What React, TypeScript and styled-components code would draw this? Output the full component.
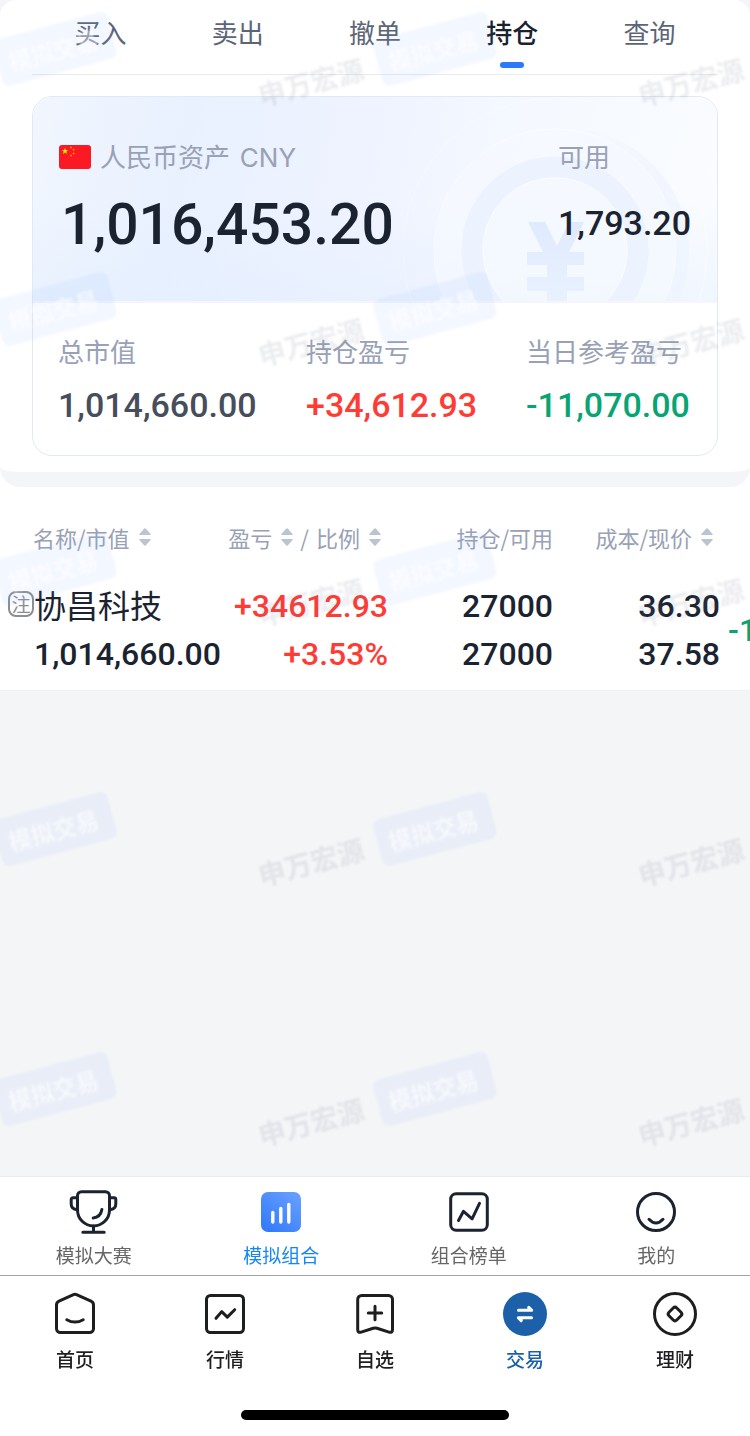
import React from "react";
import styled, { createGlobalStyle, css } from "styled-components";

const sans = `"Noto Sans CJK SC", "Noto Sans", sans-serif`;
const digits = `Roboto, "Noto Sans CJK SC", sans-serif`;

const color = {
  ink: "#1b2330",
  body: "#5c6577",
  muted: "#98a1b6",
  blue: "#2b7afb",
  brand: "#1c60a9",
  up: "#ff3b36",
  down: "#08a473",
  bg: "#f4f5f7",
};

const GlobalStyle = createGlobalStyle`
  *, *::before, *::after { box-sizing: border-box; }
  body { margin: 0; background: ${color.bg}; font-family: ${sans}; color: ${color.ink}; }
  button { margin: 0; padding: 0; border: 0; background: none; font: inherit; color: inherit; cursor: pointer; }
  a { color: inherit; text-decoration: none; }
`;

const Page = styled.div`
  position: relative;
  display: flex;
  flex-direction: column;
  min-height: 100vh;
  overflow: hidden;
`;

const ListSurface = styled.div`
  background: #fff;
`;

const Summary = styled.div`
  padding-bottom: 15px;
  background: #f4f5f9;
  border-radius: 0 0 20px 20px;
`;

const SummaryPanel = styled.div`
  padding: 0 32px 16px;
  background: #fff;
  border-radius: 16px 16px 20px 20px / 16px 16px 5px 5px;
`;

const Tabs = styled.nav`
  display: grid;
  grid-template-columns: repeat(5, 1fr);
  height: 75px;
  border-bottom: 1px solid #e9ebee;
`;

const Tab = styled.button<{ $active?: boolean }>`
  display: flex;
  flex-direction: column;
  align-items: center;
  gap: 9px;
  padding-top: 11px;
  font-size: 26px;
  line-height: 42px;
  color: ${(p) => (p.$active ? color.ink : color.body)};
  font-weight: ${(p) => (p.$active ? 500 : 400)};
  &::after {
    content: "";
    width: 24px;
    height: 6px;
    border-radius: 3px;
    background: ${(p) => (p.$active ? color.blue : "transparent")};
  }
`;

const Card = styled.section`
  margin-top: 21px;
  border: 1px solid #e2e9f4;
  border-radius: 20px;
  overflow: hidden;
`;

const Hero = styled.div`
  position: relative;
  display: flex;
  justify-content: space-between;
  height: 206px;
  padding: 39px 26px 0;
  border-bottom: 2px solid #f4f6fb;
  background:
    linear-gradient(0deg, rgba(222, 236, 255, 0.35), rgba(222, 236, 255, 0) 50%),
    linear-gradient(100deg, #f1f6fe 0%, #e9f1ff 22%, #eff3ff 48%, #f5f9ff 70%, #fafcff 100%);
`;

const Coin = styled.svg`
  position: absolute;
  right: 0;
  bottom: 0;
`;

const HeroBlock = styled.div`
  position: relative;
`;

const HeroLabel = styled.div`
  display: flex;
  align-items: center;
  gap: 9px;
  font-size: 26px;
  line-height: 40px;
  color: ${color.muted};
`;

const Currency = styled.span`
  margin-left: 4px;
  font-family: Inter, sans-serif;
`;

const Total = styled.div`
  margin-top: 12px;
  padding-left: 2px;
  font-family: ${digits};
  font-size: 57px;
  font-weight: 500;
  line-height: 70px;
`;

const Available = styled.div`
  margin-top: 26px;
  font-family: ${digits};
  font-size: 34px;
  font-weight: 500;
  line-height: 42px;
`;

const Stats = styled.dl`
  display: grid;
  grid-template-columns: 248fr 220fr 165fr;
  margin: 0;
  padding: 28px 26px 29px 25px;
`;

const StatLabel = styled.dt`
  font-size: 26px;
  line-height: 40px;
  white-space: nowrap;
  color: ${color.muted};
`;

const StatValue = styled.dd<{ $color: string }>`
  margin: 13px 0 0;
  font-family: ${digits};
  font-size: 34px;
  font-weight: 500;
  line-height: 42px;
  color: ${(p) => p.$color};
`;

const TableScroll = styled.div`
  overflow-x: auto;
  scrollbar-width: none;
  background: #fff;
  border-bottom: 1px solid #f0f1f3;
`;

const Table = styled.table`
  width: 920px;
  table-layout: fixed;
  border-collapse: collapse;
`;

const Col = styled.col<{ $w: number }>`
  width: ${(p) => p.$w}px;
`;

const Head = styled.th<{ $left?: number; $right?: number }>`
  padding: 34px ${(p) => p.$right ?? 0}px 29px ${(p) => p.$left ?? 0}px;
  text-align: ${(p) => (p.$left === undefined ? "right" : "left")};
  font-size: 22px;
  font-weight: 400;
  line-height: 32px;
  white-space: nowrap;
  color: ${color.muted};
`;

const SortButton = styled.button`
  display: inline-flex;
  align-items: center;
  gap: 9px;
  line-height: 32px;
`;

const Slash = styled.span`
  padding: 0 7px;
`;

const numberCell = css`
  font-family: ${digits};
  font-size: 32px;
  font-weight: 500;
  line-height: 48px;
`;

const Cell = styled.td<{ $color?: string; $left?: number }>`
  ${numberCell}
  padding: 0 0 12px ${(p) => p.$left ?? 0}px;
  text-align: ${(p) => (p.$left === undefined ? "right" : "left")};
  white-space: nowrap;
  color: ${(p) => p.$color ?? color.ink};
`;

const StockName = styled.a`
  display: flex;
  align-items: center;
  height: 48px;
  padding-bottom: 5px;
  font-family: ${sans};
  font-size: 32px;
  font-weight: 400;
`;

const StockValue = styled.div`
  padding-left: 26px;
`;

const Note = styled.span`
  display: flex;
  align-items: center;
  justify-content: center;
  width: 26px;
  height: 26px;
  border: 2px solid #8b8e94;
  border-radius: 8px;
  font-size: 19px;
  line-height: 20px;
  color: #8b8e94;
`;

const Spacer = styled.main`
  flex: 1;
`;

const Bar = styled.nav<{ $count: number }>`
  position: relative;
  z-index: 2;
  display: grid;
  grid-template-columns: repeat(${(p) => p.$count}, 1fr);
  background: #fff;
`;

const SimBar = styled(Bar)`
  height: 99px;
  border-top: 1px solid #e8eaf2;
`;

const MainBar = styled(Bar)`
  height: 135px;
  border-top: 1px solid #a3a3a5;
`;

const BarItem = styled.a<{ $color: string; $medium?: boolean }>`
  display: flex;
  flex-direction: column;
  align-items: center;
  padding-top: ${(p) => (p.$medium ? 16 : 13)}px;
  gap: ${(p) => (p.$medium ? 9 : 7)}px;
  font-size: 19px;
  line-height: 28px;
  font-weight: ${(p) => (p.$medium ? 500 : 400)};
  color: ${(p) => p.$color};
  svg { display: block; }
`;

const HomeArea = styled.footer`
  position: relative;
  z-index: 2;
  display: flex;
  justify-content: center;
  height: 26px;
  background: #fff;
`;

const HomeIndicator = styled.span`
  width: 268px;
  height: 10px;
  border-radius: 5px;
  background: #000;
`;

const Watermarks = styled.div`
  position: absolute;
  inset: 0;
  z-index: 1;
  display: grid;
  grid-template-columns: repeat(2, 380px);
  grid-auto-rows: 260px;
  overflow: hidden;
  pointer-events: none;
  user-select: none;
`;

const Mark = styled.div`
  display: flex;
  justify-content: space-between;
  align-items: flex-start;
  padding: 25px 15px 0 0;
  margin-left: -4px;
`;

const MarkBadge = styled.span`
  width: 118px;
  height: 48px;
  padding-right: 4px;
  border-radius: 7px;
  background: rgba(120, 170, 255, 0.09);
  color: rgba(255, 255, 255, 0.6);
  font-size: 23px;
  font-weight: 700;
  line-height: 48px;
  text-align: center;
  transform: rotate(-15deg);
  filter: blur(1px);
`;

const MarkName = styled.span`
  margin-top: 37px;
  color: rgba(110, 120, 145, 0.14);
  font-size: 27px;
  font-weight: 700;
  line-height: 40px;
  transform: rotate(-15deg);
  filter: blur(1px);
`;

const star = (cx: number, cy: number, r: number) =>
  Array.from({ length: 10 }, (_, i) => {
    const a = (Math.PI / 5) * i - Math.PI / 2;
    const d = i % 2 ? r * 0.4 : r;
    return `${cx + d * Math.cos(a)},${cy + d * Math.sin(a)}`;
  }).join(" ");

const Flag = () => (
  <svg width="32" height="24" viewBox="0 0 32 24" aria-hidden="true">
    <rect width="32" height="24" rx="3" fill="#fb1a24" />
    <g fill="#ffe600">
      <polygon points={star(6, 6.2, 3.4)} />
      <polygon points={star(12, 2.4, 1.2)} />
      <polygon points={star(14.6, 4.8, 1.2)} />
      <polygon points={star(14.6, 8.4, 1.2)} />
      <polygon points={star(12, 10.6, 1.2)} />
    </g>
  </svg>
);

const CoinArt = () => (
  <Coin width="320" height="204" viewBox="0 0 320 204" aria-hidden="true">
    <defs>
      <linearGradient id="yen" x1="0" y1="0" x2="0" y2="1">
        <stop offset="0" stopColor="#e0eafe" />
        <stop offset="1" stopColor="#e8f1fe" />
      </linearGradient>
      <linearGradient id="edge" x1="0" y1="0" x2="1" y2="0">
        <stop offset="0.5" stopColor="#ecf3fe" stopOpacity="0" />
        <stop offset="1" stopColor="#eff5fe" stopOpacity="0.9" />
      </linearGradient>
    </defs>
    <circle cx="158" cy="153" r="152" fill="none" stroke="#fff" strokeOpacity="0.35" />
    <circle cx="168" cy="155" r="124" fill="url(#edge)" />
    <circle cx="158" cy="153" r="121" fill="#f6f9ff" fillOpacity="0.65" stroke="#fff" strokeOpacity="0.5" />
    <circle cx="158" cy="153" r="83" fill="none" stroke="#ebf2ff" strokeWidth="21" strokeOpacity="0.9" />
    <circle cx="158" cy="153" r="72" fill="#f3f7ff" fillOpacity="0.5" stroke="#fff" strokeOpacity="0.7" />
    <path
      d="M131 125h17l12 24 12-24h15l-15 30h15v13h-17v12h17v14h-17v10h-20v-10h-20v-14h20v-12h-20v-13h16z"
      fill="url(#yen)"
    />
  </Coin>
);

const SortIcon = () => (
  <svg width="12" height="18" viewBox="0 0 12 18" fill="#bcc4d1" aria-hidden="true">
    <path d="M5.3.5a1 1 0 0 1 1.4 0l4.9 5.4c.4.5.1 1.1-.5 1.1H.9C.3 7 0 6.4.4 5.9z" />
    <path d="M5.3 17.5a1 1 0 0 0 1.4 0l4.9-5.4c.4-.5.1-1.1-.5-1.1H.9c-.6 0-.9.6-.5 1.1z" />
  </svg>
);

const line = {
  fill: "none",
  strokeWidth: 3,
  strokeLinecap: "round",
  strokeLinejoin: "round",
} as const;

const TrophyIcon = () => (
  <svg width="49" height="44" viewBox="0 0 49 44" stroke={color.ink} {...line} aria-hidden="true">
    <path d="M8.5 5.7a4 4 0 0 1 4-4h24a4 4 0 0 1 4 4V20a16 16 0 0 1-32 0z" />
    <path d="M8.5 7.7H4a1.8 1.8 0 0 0-1.8 1.8V14q0 5 6 5.800M40.500 7.700H45a1.800 1.800 0 0 1 1.800 1.800V14q0 5-6 5.800" />
    <path d="M24.500 36v6M13.800 42.200h21.400M32.900 19.500c-.8 4.700-3.700 8-8.700 8.500" />
  </svg>
);

const PortfolioIcon = () => (
  <svg width="40" height="44" viewBox="0 -2 40 44" aria-hidden="true">
    <defs>
      <linearGradient id="portfolio" x1="0" y1="1" x2="0.8" y2="0">
        <stop offset="0" stopColor="#2e77fb" />
        <stop offset="1" stopColor="#659eff" />
      </linearGradient>
    </defs>
    <rect width="40" height="40" rx="7" fill="url(#portfolio)" />
    <path d="M11.800 20.500v9.500M19.800 16.500v13.500M27.800 12.500v17.500" stroke="#fff" strokeWidth="3.400" strokeLinecap="round" />
  </svg>
);

const RankIcon = () => (
  <svg width="40" height="44" viewBox="0 -2 40 44" stroke={color.ink} {...line} aria-hidden="true">
    <rect x="1.700" y="1.700" width="36.600" height="36.600" rx="5.500" />
    <path d="M9.500 28.500l5-9.200 8.600 7.500 7.400-15.500" />
  </svg>
);

const MeIcon = () => (
  <svg width="40" height="44" viewBox="0 -2 40 44" stroke={color.ink} {...line} aria-hidden="true">
    <circle cx="20" cy="20" r="18.500" />
    <path d="M13 27.300q7 7.500 14 0" />
  </svg>
);

const dark = "#1d1e20";

const HomeIcon = () => (
  <svg width="44" height="44" viewBox="0 0 44 44" stroke={dark} {...line} aria-hidden="true">
    <path d="M20.500 2.600L6 9.200Q3.500 10.400 3.500 13v23.600a4 4 0 0 0 4 4h29a4 4 0 0 0 4-4V13q0-2.600-2.500-3.800L23.500 2.600q-1.500-.7-3 0z" />
    <path d="M13.800 27.700q8.200 4.800 16.400 0" />
  </svg>
);

const MarketIcon = () => (
  <svg width="44" height="44" viewBox="0 0 44 44" stroke={dark} {...line} aria-hidden="true">
    <rect x="3.500" y="3.500" width="37" height="37" rx="4" />
    <path d="M13 26.300l5.700-6.700 5.600 5.500 7.400-7.400" />
  </svg>
);

const WatchIcon = () => (
  <svg width="44" height="44" viewBox="0 0 44 44" stroke={dark} {...line} aria-hidden="true">
    <path d="M4.700 7.500a4 4 0 0 1 4-4h26.800a4 4 0 0 1 4 4v30q0 3.600-3.500 2.600l-12-3.800q-1.900-.6-3.800 0l-12 3.800q-3.500 1-3.500-2.600z" />
    <path d="M22 14.300v13.400M15.300 21h13.400" />
  </svg>
);

const TradeIcon = () => (
  <svg width="44" height="44" viewBox="0 0 44 44" aria-hidden="true">
    <circle cx="22" cy="22" r="22" fill={color.brand} />
    <path
      d="M15.500 18.300h13.200l-2.900-2.900v2.900M28.500 25.800H15.300l2.900 2.900v-2.900"
      fill="#fff"
      stroke="#fff"
      strokeWidth="3"
      strokeLinecap="round"
      strokeLinejoin="round"
    />
  </svg>
);

const WealthIcon = () => (
  <svg width="44" height="44" viewBox="0 0 44 44" stroke={dark} {...line} aria-hidden="true">
    <circle cx="22" cy="22" r="20.500" />
    <rect x="16.500" y="16.500" width="11" height="11" rx="2.500" transform="rotate(45 22 22)" />
  </svg>
);

const tabs = ["买入", "卖出", "撤单", "持仓", "查询"];

const stats = [
  { label: "总市值", value: "1,014,660.00", color: "#464e5b" },
  { label: "持仓盈亏", value: "+34,612.93", color: color.up },
  { label: "当日参考盈亏", value: "-11,070.00", color: color.down },
];

const simItems = [
  { label: "模拟大赛", Icon: TrophyIcon },
  { label: "模拟组合", Icon: PortfolioIcon, active: true },
  { label: "组合榜单", Icon: RankIcon },
  { label: "我的", Icon: MeIcon },
];

const mainItems = [
  { label: "首页", Icon: HomeIcon },
  { label: "行情", Icon: MarketIcon },
  { label: "自选", Icon: WatchIcon },
  { label: "交易", Icon: TradeIcon, active: true },
  { label: "理财", Icon: WealthIcon },
];

export default function App() {
  return (
    <Page>
      <GlobalStyle />
      <ListSurface>
        <Summary>
          <SummaryPanel>
            <Tabs>
              {tabs.map((t) => (
                <Tab key={t} $active={t === "持仓"}>
                  {t}
                </Tab>
              ))}
            </Tabs>
            <Card>
              <Hero>
                <CoinArt />
                <HeroBlock>
                  <HeroLabel>
                    <Flag />
                    <span>
                      人民币资产 <Currency>CNY</Currency>
                    </span>
                  </HeroLabel>
                  <Total>1,016,453.20</Total>
                </HeroBlock>
                <HeroBlock>
                  <HeroLabel>可用</HeroLabel>
                  <Available>1,793.20</Available>
                </HeroBlock>
              </Hero>
              <Stats>
                {stats.map((s) => (
                  <div key={s.label}>
                    <StatLabel>{s.label}</StatLabel>
                    <StatValue $color={s.color}>{s.value}</StatValue>
                  </div>
                ))}
              </Stats>
            </Card>
          </SummaryPanel>
        </Summary>
      </ListSurface>
      <TableScroll>
        <Table>
          <colgroup>
            <Col $w={222} />
            <Col $w={166} />
            <Col $w={165} />
            <Col $w={167} />
            <Col $w={200} />
          </colgroup>
          <thead>
            <tr>
              <Head $left={33}>
                <SortButton>
                  名称/市值
                  <SortIcon />
                </SortButton>
              </Head>
              <Head $right={7}>
                <SortButton>
                  盈亏
                  <SortIcon />
                </SortButton>
                <Slash>/</Slash>
                <SortButton>
                  比例
                  <SortIcon />
                </SortButton>
              </Head>
              <Head>持仓/可用</Head>
              <Head $right={7}>
                <SortButton>
                  成本/现价
                  <SortIcon />
                </SortButton>
              </Head>
              <Head aria-label="当日盈亏" />
            </tr>
          </thead>
          <tbody>
            <tr>
              <Cell $left={8}>
                <StockName href="#stock">
                  <Note>注</Note>
                  协昌科技
                </StockName>
                <StockValue>1,014,660.00</StockValue>
              </Cell>
              <Cell $color={color.up}>
                <div>+34612.93</div>
                <div>+3.53%</div>
              </Cell>
              <Cell>
                <div>27000</div>
                <div>27000</div>
              </Cell>
              <Cell>
                <div>36.30</div>
                <div>37.58</div>
              </Cell>
              <Cell $left={8} $color={color.down}>
                -11,070.00
              </Cell>
            </tr>
          </tbody>
        </Table>
      </TableScroll>
      <Spacer />
      <Watermarks aria-hidden="true">
        {Array.from({ length: 10 }, (_, i) => (
          <Mark key={i}>
            <MarkBadge>模拟交易</MarkBadge>
            <MarkName>申万宏源</MarkName>
          </Mark>
        ))}
      </Watermarks>
      <SimBar $count={4}>
        {simItems.map(({ label, Icon, active }) => (
          <BarItem key={label} href="#sim" $color={active ? "#1486fa" : "#666"}>
            <Icon />
            {label}
          </BarItem>
        ))}
      </SimBar>
      <MainBar $count={5}>
        {mainItems.map(({ label, Icon, active }) => (
          <BarItem key={label} href="#main" $medium $color={active ? color.brand : dark}>
            <Icon />
            {label}
          </BarItem>
        ))}
      </MainBar>
      <HomeArea>
        <HomeIndicator />
      </HomeArea>
    </Page>
  );
}
